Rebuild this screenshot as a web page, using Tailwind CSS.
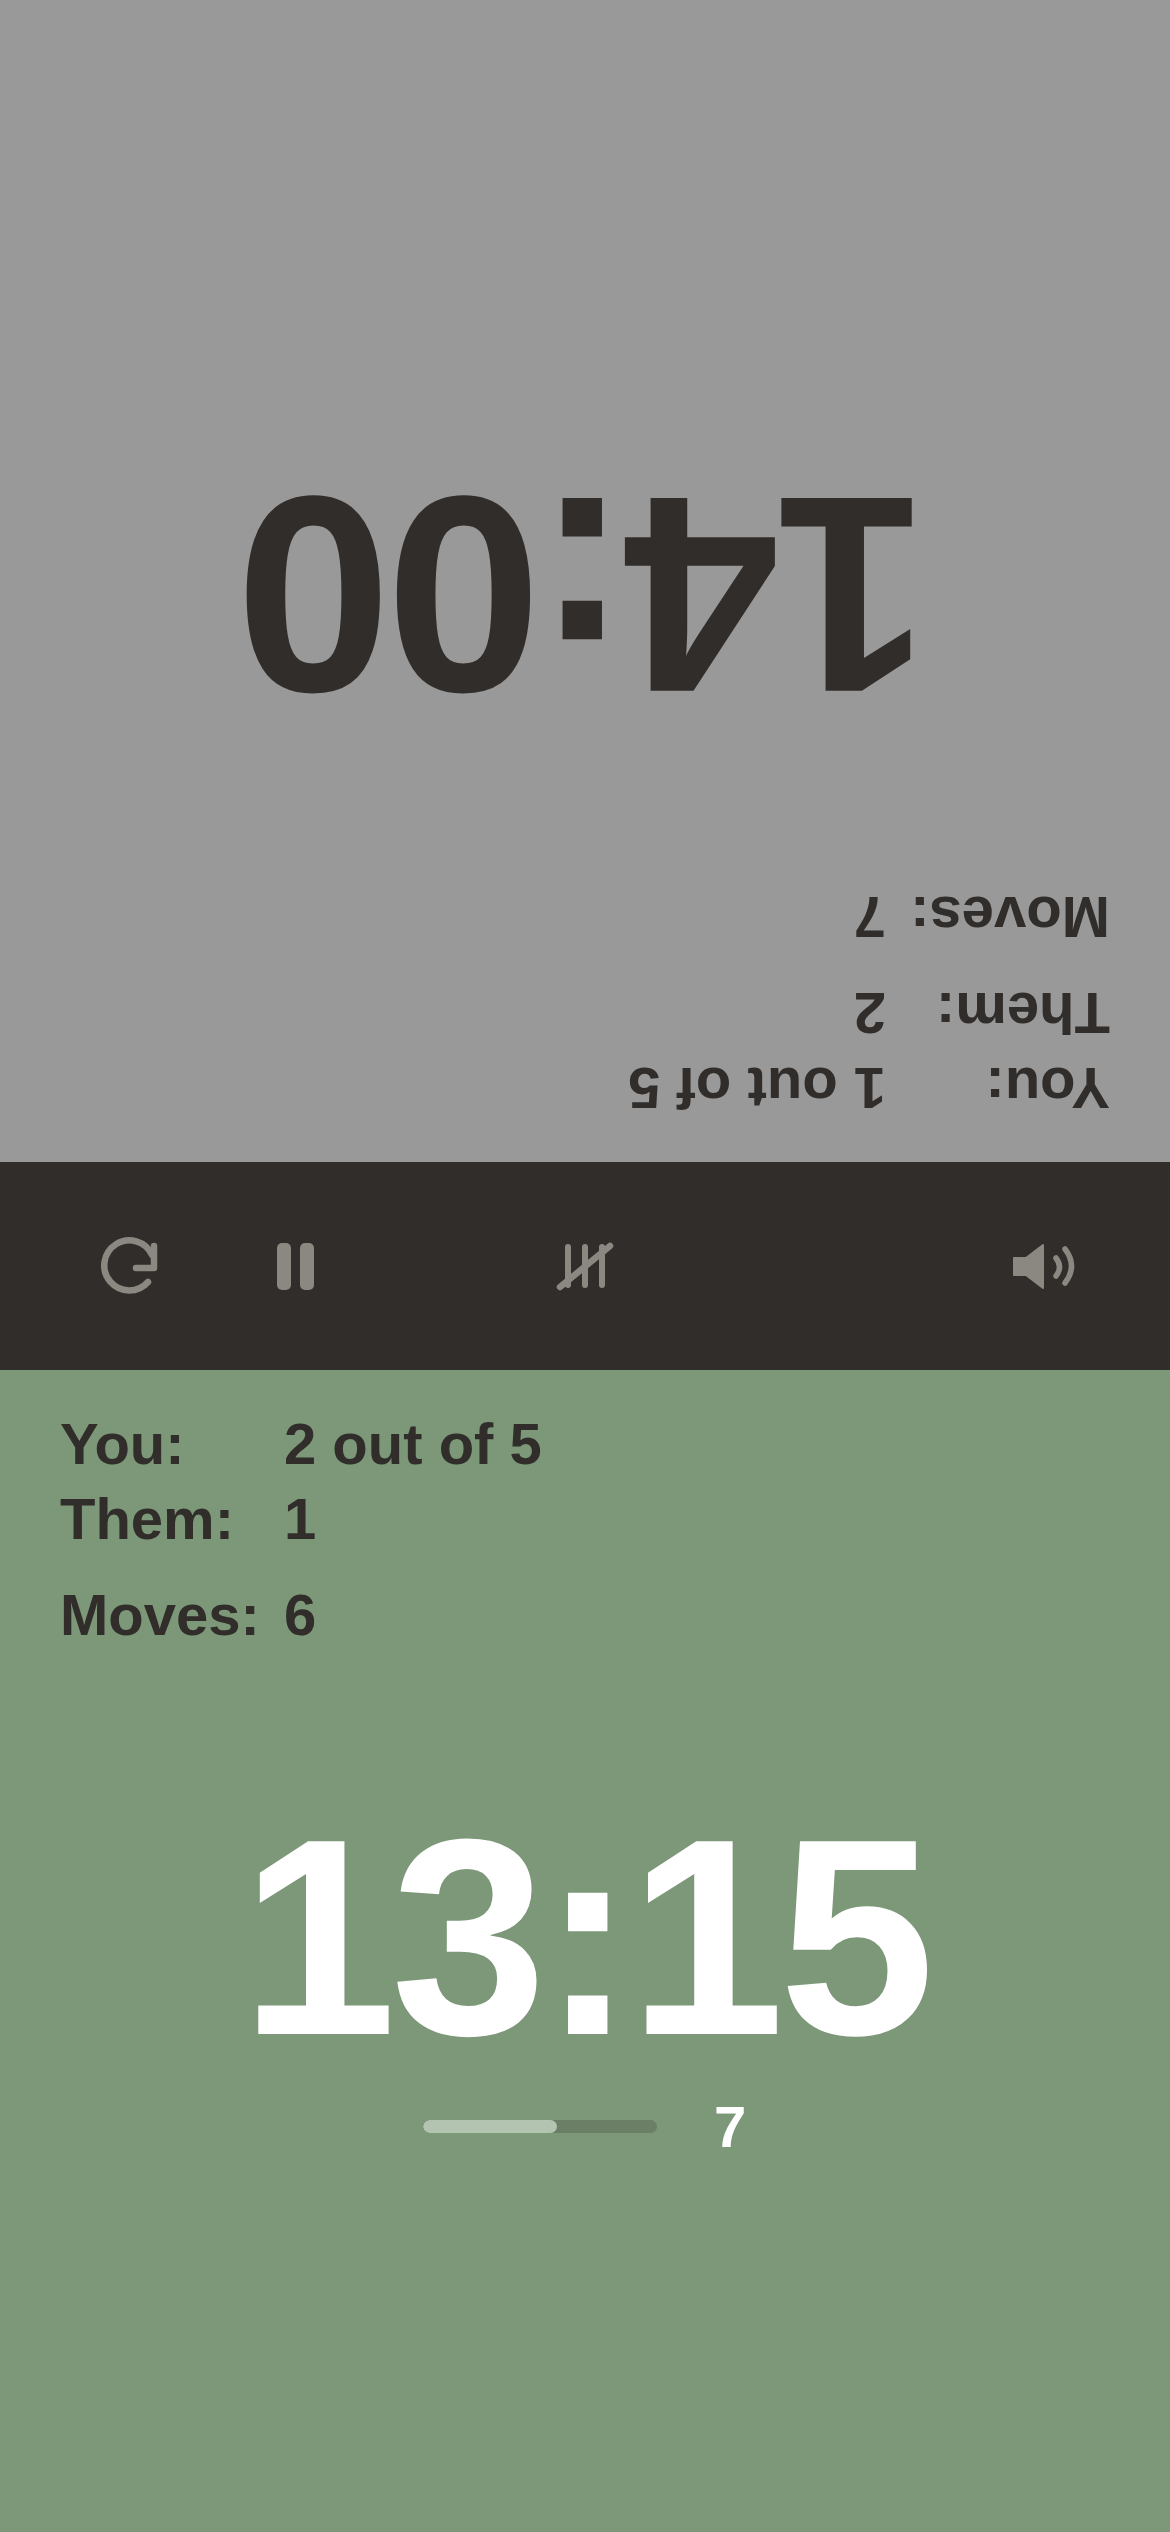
<!DOCTYPE html>
<html><head><meta charset="utf-8">
<script src="https://cdn.jsdelivr.net/npm/@tailwindcss/browser@4"></script>
</head>
<body class="m-0">
<div class="w-[1170px] h-[2532px] flex flex-col overflow-hidden font-['Liberation_Sans',Arial,sans-serif] font-bold text-[#312d2a]">
  <section class="h-[1162px] shrink-0 bg-[#999999] rotate-180 px-[60px] pt-[36px]">
    <div class="grid grid-cols-[224px_1fr] text-[58px] leading-[75px]">
      <div>You:</div><div>1 out of 5</div>
      <div>Them:</div><div>2</div>
      <div class="mt-[21px]">Moves:</div><div class="mt-[21px]">7</div>
    </div>
    <div class="mt-[145px] text-center text-[280px] leading-[280px] tracking-[-5.5px]">14:00</div>
  </section>
  <nav class="h-[208px] bg-[#312d2a] relative shrink-0">
    <svg class="absolute left-[100px] top-[74px]" width="60" height="60" viewBox="0 0 60 60" fill="none" stroke="#8a8880" stroke-width="6.5" stroke-linecap="round" stroke-linejoin="round"><path d="M48 46A25 25 0 1 1 52 19"/><path d="M54 10V32H36"/></svg>
    <div class="absolute left-[277px] top-[81px] flex gap-[9px]"><div class="w-[14px] h-[47px] rounded-[5px] bg-[#8a8880]"></div><div class="w-[14px] h-[47px] rounded-[5px] bg-[#8a8880]"></div></div>
    <svg class="absolute left-[555px] top-[78px]" width="60" height="54" viewBox="0 0 60 54" fill="none" stroke="#8a8880" stroke-linecap="round"><path stroke-width="6" d="M13 7V45M30 7V45M47 7V45"/><path stroke-width="6.5" d="M5 47L55 6"/></svg>
    <svg class="absolute left-[1010px] top-[72px]" width="70" height="66" viewBox="0 0 70 66" fill="none"><path fill="#8a8880" stroke="#8a8880" stroke-width="2" stroke-linejoin="round" d="M4 24H16L33 11V54L16 41H4Z"/><path stroke="#8a8880" stroke-width="5.5" stroke-linecap="round" d="M46 24Q53 33 46 42M55 15Q68 32 55 49"/></svg>
  </nav>
  <section class="flex-1 bg-[#7c9878] px-[60px] pt-[36px]">
    <div class="grid grid-cols-[224px_1fr] text-[58px] leading-[75px]">
      <div>You:</div><div>2 out of 5</div>
      <div>Them:</div><div>1</div>
      <div class="mt-[21px]">Moves:</div><div class="mt-[21px]">6</div>
    </div>
    <div class="mt-[145px] text-center text-white text-[280px] leading-[280px] tracking-[-5.5px]">13:15</div>
    <div class="flex items-center mt-[12px] ml-[363px]">
      <div class="w-[234px] h-[13px] rounded-full bg-[#6b7f67] overflow-hidden"><div class="h-full w-[134px] rounded-full bg-[#b3c4b0]"></div></div>
      <div class="ml-[57px] text-white text-[58px] leading-[75px]">7</div>
    </div>
  </section>
</div>
</body></html>
